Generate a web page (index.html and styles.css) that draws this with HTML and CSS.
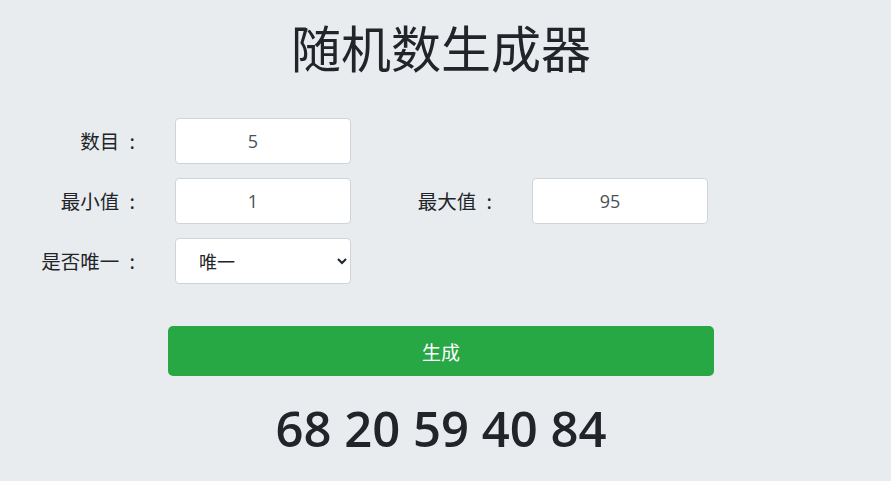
FILE: index.html
```html
<!DOCTYPE html>
<html lang="zh-CN">
<head>
  <meta charset="UTF-8" />
  <meta name="viewport" content="width=device-width, initial-scale=1.0"/>
  <title>随机数生成器</title>
  <link rel="stylesheet" href="styles.css">
</head>
<body>
  <div class="page">
    <h1>随机数生成器</h1>
    <div class="form-grid">
      <label for="count">数目 :</label>
      <input type="number" id="count" value="5" />
      <span></span><span></span>

      <label for="min">最小值 :</label>
      <input type="number" id="min" value="1" />
      <label for="max">最大值 :</label>
      <input type="number" id="max" value="95" />

      <label for="unique">是否唯一 :</label>
      <select id="unique">
        <option value="1">唯一</option>
        <option value="0">不唯一</option>
      </select>
    </div>

    <button class="generate" onclick="generate()">生成</button>

    <div class="result" id="result">68 20 59 40 84</div>
  </div>

  <script>
    function generate() {
      const count = parseInt(document.getElementById('count').value);
      const min = parseInt(document.getElementById('min').value);
      const max = parseInt(document.getElementById('max').value);
      const unique = document.getElementById('unique').value === '1';
      const nums = [];
      let tries = 0;
      while (nums.length < count && tries < 10000) {
        const n = Math.floor(Math.random() * (max - min + 1)) + min;
        tries++;
        if (unique && nums.includes(n)) continue;
        nums.push(n);
      }
      document.getElementById('result').textContent = nums.join(' ');
    }
  </script>
</body>
</html>
```

FILE: styles.css
```css
body {
  margin: 0;
  background-color: #e9ecef;
  color: #212529;
  font-family: "Open Sans", "Noto Sans CJK SC", sans-serif;
}
.page {
  width: 882px;
  display: flex;
  flex-direction: column;
  align-items: center;
}
h1 {
  font-family: "Noto Sans CJK SC", sans-serif;
  font-size: 50px;
  font-weight: 400;
  line-height: 60px;
  margin: 16px 0 42px;
  color: #212529;
}
.form-grid {
  align-self: flex-start;
  margin-left: 8px;
  display: grid;
  grid-template-columns: 130px 176px 107px 176px;
  grid-auto-rows: 46px;
  column-gap: 37px;
  row-gap: 14px;
  align-items: center;
}
label {
  font-family: "Noto Sans CJK SC", sans-serif;
  font-size: 19.5px;
  word-spacing: 6px;
  text-align: right;
  white-space: nowrap;
  padding-right: 3px;
  margin-top: -2px;
  color: #212529;
}
input, select {
  box-sizing: border-box;
  width: 100%;
  height: 46px;
  border: 1px solid #ced4da;
  border-radius: 4px;
  background: #fff;
  color: #495057;
  font-family: "Open Sans", "Noto Sans CJK SC", sans-serif;
  font-size: 18px;
  text-align: center;
  padding: 0 32px 0 12px;
}
input::-webkit-outer-spin-button,
input::-webkit-inner-spin-button {
  -webkit-appearance: none;
  margin: 0;
}
input[type=number] {
  -moz-appearance: textfield;
}
select {
  text-align: left;
  padding: 0 8px 0 19px;
  font-family: "Noto Sans CJK SC", sans-serif;
  font-size: 18px;
  color: #212529;
}
.generate {
  width: 546px;
  height: 50px;
  margin-top: 42px;
  border: none;
  border-radius: 5px;
  background-color: #28a745;
  color: #fff;
  font-family: "Noto Sans CJK SC", sans-serif;
  font-size: 19px;
  cursor: pointer;
}
.generate:hover {
  background-color: #218838;
}
.result {
  margin-top: 23px;
  font-size: 49px;
  font-weight: 600;
  line-height: 58px;
  color: #212529;
}
```
